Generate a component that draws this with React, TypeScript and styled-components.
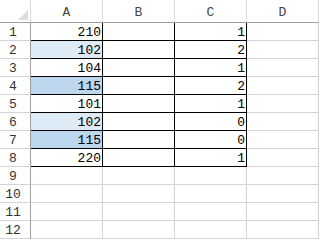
import * as React from "react";
import styled, { createGlobalStyle } from "styled-components";

const GlobalStyle = createGlobalStyle`
  html, body {
    margin: 0;
    padding: 0;
    background: #fff;
    overflow: hidden;
  }
`;

const Sheet = styled.div`
  display: grid;
  grid-template-columns: 31px repeat(4, 72px);
  grid-auto-rows: 18px;
  grid-template-rows: 23px;
  font-family: "Liberation Mono", "Noto Sans CJK SC", monospace;
  font-size: 13px;
  color: #000;
`;

const Corner = styled.div`
  box-sizing: border-box;
  position: relative;
  border-right: 1px solid #dadada;
  border-bottom: 1px solid #9e9e9e;
`;

const CornerMark = styled.svg`
  position: absolute;
  right: 2px;
  bottom: 2px;
`;

const ColHead = styled.div`
  box-sizing: border-box;
  display: flex;
  align-items: flex-end;
  justify-content: center;
  padding-bottom: 2px;
  line-height: 14px;
  color: #444;
  border-right: 1px solid #dadada;
  border-bottom: 1px solid #9e9e9e;
`;

const RowHead = styled.div`
  box-sizing: border-box;
  display: flex;
  align-items: flex-end;
  justify-content: center;
  padding-right: 4px;
  line-height: 14px;
  color: #333;
  border-right: 1px solid #9e9e9e;
  border-bottom: 1px solid #d4d4d4;
`;

const Cell = styled.div<{ $fill?: string; $boxed?: boolean }>`
  box-sizing: border-box;
  display: flex;
  align-items: flex-end;
  justify-content: flex-end;
  padding-right: 1px;
  line-height: 14px;
  background: ${(p) => p.$fill || "#fff"};
  border-right: 1px solid ${(p) => (p.$boxed ? "#000" : "#d4d4d4")};
  border-bottom: 1px solid ${(p) => (p.$boxed ? "#000" : "#d4d4d4")};
`;

const fills: Record<string, string> = {
  light: "#ddebf7",
  dark: "#bdd7ee",
};

const rows: { a: string; c: string; fill?: string }[] = [
  { a: "210", c: "1" },
  { a: "102", c: "2", fill: "light" },
  { a: "104", c: "1" },
  { a: "115", c: "2", fill: "dark" },
  { a: "101", c: "1" },
  { a: "102", c: "0", fill: "light" },
  { a: "115", c: "0", fill: "dark" },
  { a: "220", c: "1" },
];

export default function App() {
  const lines = [];
  for (let i = 0; i < 12; i++) {
    const r = rows[i];
    const boxed = !!r;
    lines.push(
      <React.Fragment key={i}>
        <RowHead>{i + 1}</RowHead>
        <Cell $boxed={boxed} $fill={r && r.fill ? fills[r.fill] : undefined}>
          {r ? r.a : ""}
        </Cell>
        <Cell $boxed={boxed} />
        <Cell $boxed={boxed}>{r ? r.c : ""}</Cell>
        <Cell />
      </React.Fragment>
    );
  }

  return (
    <>
      <GlobalStyle />
      <Sheet>
        <Corner>
          <CornerMark width="10" height="10" viewBox="0 0 10 10">
            <polygon points="10,0 10,10 0,10" fill="#dcdcdc" />
          </CornerMark>
        </Corner>
        <ColHead>A</ColHead>
        <ColHead>B</ColHead>
        <ColHead>C</ColHead>
        <ColHead>D</ColHead>
        {lines}
      </Sheet>
    </>
  );
}
